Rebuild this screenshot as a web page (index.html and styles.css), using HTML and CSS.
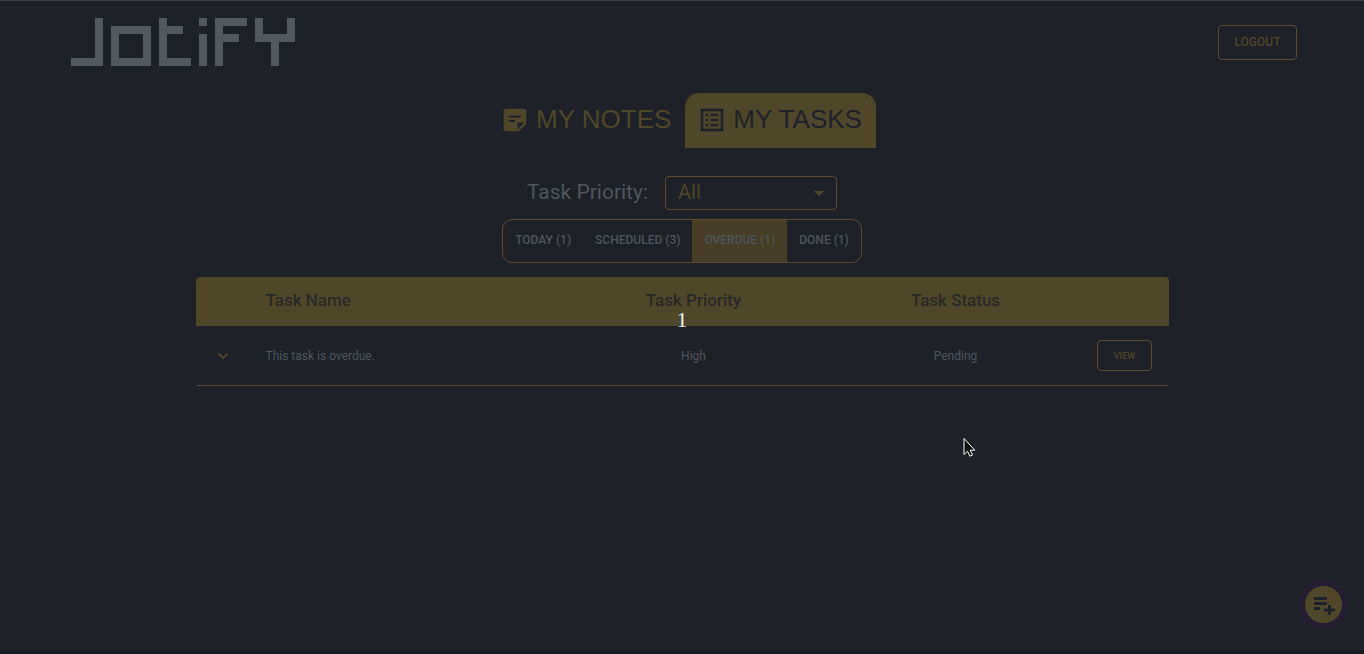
FILE: index.html
```html
<!DOCTYPE html>
<html lang="en">
<head>
<meta charset="utf-8">
<meta name="viewport" content="width=device-width, initial-scale=1">
<title>Jotify - My Tasks</title>
<link rel="stylesheet" href="styles.css">
</head>
<body>
<header class="topbar">
  <svg class="logo" viewBox="0 0 28 6" role="img" aria-label="Jotify">
    <rect x="3" y="0" width="1" height="5"/><rect x="0" y="5" width="4" height="1"/>
    <rect x="5" y="1" width="5" height="1"/><rect x="5" y="5" width="5" height="1"/><rect x="5" y="2" width="1" height="3"/><rect x="9" y="2" width="1" height="3"/>
    <rect x="11" y="0" width="1" height="6"/><rect x="12" y="1" width="2" height="1"/><rect x="12" y="5" width="3" height="1"/>
    <rect x="16" y="0" width="1" height="1"/><rect x="16" y="2" width="1" height="4"/>
    <rect x="18" y="0" width="1" height="6"/><rect x="19" y="0" width="3" height="1"/><rect x="19" y="2" width="2" height="1"/>
    <rect x="23" y="0" width="1" height="3"/><rect x="27" y="0" width="1" height="3"/><rect x="24" y="2" width="3" height="1"/><rect x="25" y="3" width="1" height="3"/>
  </svg>
  <button class="btn logout" type="button">LOGOUT</button>
</header>

<main class="content">
  <nav class="tabs">
    <button class="tab" type="button">
      <svg class="tab-icon" viewBox="0 0 24 24" aria-hidden="true"><path fill-rule="evenodd" d="M19 3H5c-1.100 0-2 .9-2 2v14c0 1.100.9 2 2 2h10l6-6V5c0-1.100-.9-2-2-2zM7 8.500h10V10H7zM12 13.500H7V12h5zM14 19.500V14h5.500z"/></svg>
      <span>MY NOTES</span>
    </button>
    <button class="tab tab-active" type="button">
      <svg class="tab-icon" viewBox="0 0 24 24" aria-hidden="true"><path fill-rule="evenodd" d="M3 3h18v18H3zM5 5v14h14V5zM7 7h2v2H7zM7 11h2v2H7zM7 15h2v2H7zM11 7h6v2h-6zM11 11h6v2h-6zM11 15h6v2h-6z"/></svg>
      <span>MY TASKS</span>
    </button>
  </nav>

  <div class="filter">
    <label class="filter-label" for="priority">Task Priority:</label>
    <div class="select-box">
      <select id="priority" class="select"><option>All</option><option>High</option><option>Medium</option><option>Low</option></select>
      <svg class="select-arrow" viewBox="0 0 10 5" aria-hidden="true"><path d="M0 0h10L5 5z"/></svg>
    </div>
  </div>

  <div class="group" role="group" aria-label="Task status">
    <button class="group-item" type="button">TODAY (1)</button>
    <button class="group-item" type="button">SCHEDULED (3)</button>
    <button class="group-item group-selected" type="button">OVERDUE (1)</button>
    <button class="group-item" type="button">DONE (1)</button>
  </div>

  <table class="tasks">
    <thead>
      <tr><th class="col-toggle"></th><th class="col-name">Task Name</th><th class="col-priority">Task Priority</th><th class="col-status">Task Status</th><th class="col-action"></th></tr>
    </thead>
    <tbody>
      <tr>
        <td class="col-toggle"><button class="expand" type="button" aria-label="Expand row"><svg class="chevron" viewBox="0 0 12 8" aria-hidden="true"><path d="M1.500 1.500L6 6l4.500-4.500"/></svg></button></td>
        <td class="col-name">This task is overdue.</td>
        <td class="col-priority">High</td>
        <td class="col-status">Pending</td>
        <td class="col-action"><button class="btn view" type="button">VIEW</button></td>
      </tr>
    </tbody>
  </table>
</main>

<div class="countdown">1</div>

<button class="fab" type="button" aria-label="Add task">
  <svg class="fab-icon" viewBox="0 0 24 24" aria-hidden="true"><path d="M2 4h13v3H2zM2 9h13v3H2zM2 14h6v3H2zM16 12h3v3.500h4v3h-4V22h-3v-3.500h-4v-3h4z"/></svg>
</button>

<svg class="pointer" viewBox="0 0 14 21" aria-hidden="true"><path d="M1 1.500v16l3.500-3.300 2.400 5 2.600-1.200-2.300-4.800h4.600z"/></svg>
</body>
</html>
```
FILE: styles.css
```css
:root {
  --bg: #1e2128;
  --gold: #4f4729;
  --edge: #5b4c30;
  --text: #50555b;
}
* { box-sizing: border-box; }
body {
  margin: 0;
  min-height: 100vh;
  background: var(--bg);
  border-top: 1px solid #383e39;
  color: var(--text);
  font-family: Roboto, "Liberation Sans", sans-serif;
  font-size: 12px;
}
button, select { font: inherit; color: inherit; background: none; border: 0; padding: 0; margin: 0; }
.topbar {
  display: flex;
  justify-content: space-between;
  align-items: center;
  height: 82px;
  padding: 0 67px 0 71px;
}
.logo { width: 224px; height: 48px; fill: #52585c; shape-rendering: crispEdges; }
.btn { border: 1px solid var(--edge); border-radius: 4px; color: var(--gold); font-weight: 500; }
.logout { width: 79px; height: 35px; font-size: 12px; }
.content { display: flex; flex-direction: column; align-items: center; padding-top: 10px; }
.tabs { display: flex; }
.tab {
  display: flex;
  align-items: center;
  gap: 6px;
  height: 55px;
  padding: 0 14px 2px 12px;
  border-radius: 14px 14px 0 0;
  color: var(--gold);
  font-family: "Liberation Sans", Arial, sans-serif;
  font-size: 26px;
}
.tab-active { background: var(--gold); color: var(--bg); }
.tab-icon { width: 30px; height: 30px; fill: currentColor; }
.filter { display: flex; align-items: center; gap: 17px; margin-top: 28px; }
.filter-label { font-size: 21px; line-height: 32px; padding-bottom: 2px; }
.select-box { display: grid; align-items: center; }
.select-box > * { grid-area: 1 / 1; }
.select {
  appearance: none;
  width: 172px;
  height: 34px;
  padding: 0 12px 2px;
  border: 1px solid var(--edge);
  border-radius: 4px;
  color: var(--gold);
  font-size: 20px;
}
.select-arrow { width: 10px; height: 5px; margin-right: 13px; justify-self: end; fill: var(--gold); pointer-events: none; }
.group {
  display: flex;
  height: 44px;
  margin-top: 9px;
  border: 1px solid var(--edge);
  border-radius: 10px;
  overflow: hidden;
}
.group-item { padding: 0 12px 2px; font-size: 12px; font-weight: 500; }
.group-selected { background: #463f26; }
.tasks { width: calc(100% - 391px); margin-top: 14px; border-spacing: 0; table-layout: fixed; }
.tasks th { height: 49px; background: var(--gold); color: #292925; font-size: 17px; font-weight: 500; padding: 0 0 4px; }
.tasks th:first-child { border-top-left-radius: 4px; }
.tasks th:last-child { border-top-right-radius: 4px; }
.tasks td { height: 60px; padding: 0; border-bottom: 1px solid var(--edge); text-align: center; }
.tasks td:first-child { border-left: 2px solid var(--bg); padding-right: 4px; }
.tasks td:last-child { border-right: 2px solid var(--bg); padding-right: 4px; }
.tasks .col-toggle { width: 56px; }
.tasks .col-name { text-align: left; padding-left: 14px; }
.tasks .col-priority { width: 262px; }
.tasks .col-status { width: 262px; }
.tasks .col-action { width: 82px; }
.expand { width: 24px; height: 24px; }
.chevron { width: 12px; height: 8px; fill: none; stroke: var(--gold); stroke-width: 2; }
.view { width: 55px; height: 31px; font-size: 9px; }
.countdown {
  position: absolute;
  top: 49%;
  left: 50%;
  transform: translate(-50%, -50%);
  color: #e8eef0;
  font: 22px/26px "Liberation Serif", "Times New Roman", serif;
}
.fab {
  position: fixed;
  right: 16px;
  bottom: 25px;
  display: grid;
  place-items: center;
  width: 49px;
  height: 49px;
  border-radius: 50%;
  background:
    radial-gradient(circle, var(--gold) 18px, transparent 19px),
    repeating-conic-gradient(#2b1a36 0 25%, #1c2029 0 50%) 0 0 / 4px 4px;
}
.fab-icon { width: 24px; height: 24px; fill: var(--bg); }
body::after {
  content: "";
  position: fixed;
  inset: auto 0 0;
  height: 3px;
  background: #1a1b23;
}
.pointer { position: absolute; left: 963px; top: 437px; width: 14px; height: 21px; fill: #111; stroke: #fff; stroke-width: 1; }
```
